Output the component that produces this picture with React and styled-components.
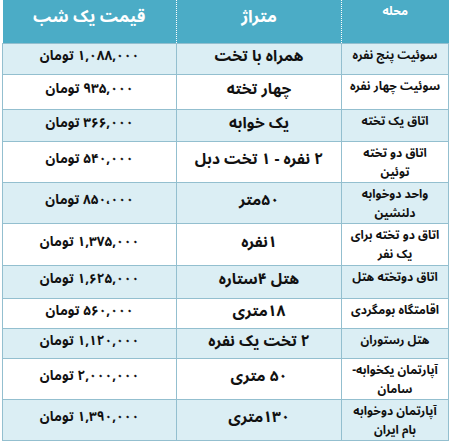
import React from "react";
import styled, { createGlobalStyle } from "styled-components";

const GlobalStyle = createGlobalStyle`
  html, body {
    margin: 0;
    padding: 0;
    background: #ffffff;
  }
  body {
    font-family: "Noto Sans Arabic", "Noto Naskh Arabic", "DejaVu Sans", sans-serif;
    color: #111;
  }
`;

const Page = styled.div`
  padding: 0 0 0 1px;
  direction: rtl;
`;

const Table = styled.table`
  width: 446px;
  border-collapse: collapse;
  table-layout: fixed;
`;

const HeadRow = styled.tr`
  height: 43px;
  background: #4bacc6;
`;

const HeadCell = styled.th`
  color: #fff;
  padding: ${p => (p.$small ? "2px 0 0" : "4px 0 0")};
  vertical-align: top;
  font-size: ${p => (p.$small ? "12px" : "17px")};
  font-weight: 700;
  text-align: center;
  border-left: ${p => (p.$last ? "none" : "1px dotted #ffffff")};
  line-height: ${p => (p.$small ? "20px" : "26px")};
`;

const Row = styled.tr`
  background: ${p => (p.$alt ? "#dbeef4" : "#ffffff")};
`;

const PlaceCell = styled.td`
  border: 1px solid #93bfcf;
  vertical-align: top;
  padding: 2px 2px 0;
  font-size: 12px;
  font-weight: 700;
  line-height: 19px;
  text-align: center;
  white-space: nowrap;
`;

const ValueCell = styled.td`
  border: 1px solid #93bfcf;
  vertical-align: middle;
  padding: 0 0 5px;
  font-size: ${p => (p.$price ? "13.5px" : "15.5px")};
  line-height: 20px;
  font-weight: 700;
  text-align: center;
  white-space: nowrap;
`;

const rows = [
  [["سوئیت پنج نفره"], "همراه با تخت", "۱,۰۸۸,۰۰۰ تومان", 31],
  [["سوئیت چهار نفره"], "چهار تخته", "۹۳۵,۰۰۰ تومان", 35],
  [["اتاق یک تخته"], "یک خوابه", "۳۶۶,۰۰۰ تومان", 32],
  [["اتاق دو تخته", "توئین"], "۲ نفره - ۱ تخت دبل", "۵۴۰,۰۰۰ تومان", 40],
  [["واحد دوخوابه", "دلنشین"], "۵۰متر", "۸۵۰،۰۰۰ تومان", 38],
  [["اتاق دو تخته برای", "یک نفر"], "۱نفره", "۱,۳۷۵,۰۰۰ تومان", 42],
  [["اتاق دوتخته هتل"], "هتل ۴ستاره", "۱,۶۲۵,۰۰۰ تومان", 33],
  [["اقامتگاه بومگردی"], "۱۸متری", "۵۶۰,۰۰۰ تومان", 30],
  [["هتل رستوران"], "۲ تخت یک نفره", "۱,۱۲۰,۰۰۰ تومان", 30],
  [["آپارتمان یکخوابه-", "سامان"], "۵۰ متری", "۲,۰۰۰,۰۰۰ تومان", 41],
  [["آپارتمان دوخوابه", "بام ایران"], "۱۳۰متری", "۱,۳۹۰,۰۰۰ تومان", 39],
];

export default function App() {
  return (
    <Page>
      <GlobalStyle />
      <Table>
        <colgroup>
          <col style={{ width: 107 }} />
          <col style={{ width: 165 }} />
          <col style={{ width: 174 }} />
        </colgroup>
        <thead>
          <HeadRow>
            <HeadCell $small>محله</HeadCell>
            <HeadCell>متراژ</HeadCell>
            <HeadCell $last>قیمت یک شب</HeadCell>
          </HeadRow>
        </thead>
        <tbody>
          {rows.map(([place, size, price, h], i) => (
            <Row key={i} $alt={i % 2 === 0} style={{ height: h }}>
              <PlaceCell>
                {place.map((line, j) => (
                  <div key={j}>{line}</div>
                ))}
              </PlaceCell>
              <ValueCell>{size}</ValueCell>
              <ValueCell $price>{price}</ValueCell>
            </Row>
          ))}
        </tbody>
      </Table>
    </Page>
  );
}
